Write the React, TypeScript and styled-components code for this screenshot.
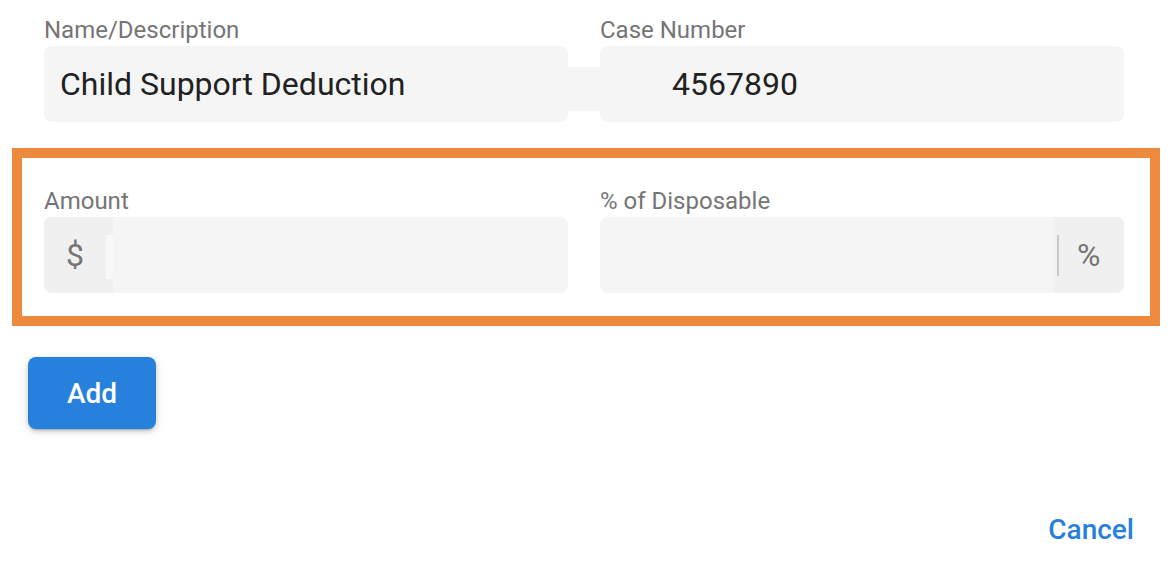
import styled, { createGlobalStyle } from 'styled-components'

const GlobalStyle = createGlobalStyle`
  body {
    margin: 0;
    background: #ffffff;
    font-family: Roboto, 'Liberation Sans', sans-serif;
  }
`

const Page = styled.div`
  width: 1170px;
  height: 578px;
  box-sizing: border-box;
  padding: 16px 10px 0 12px;
`

const FieldGrid = styled.div<{ $indent?: number }>`
  display: grid;
  grid-template-columns: 524px 32px 524px;
  grid-template-rows: auto 76px;
  align-items: start;
  margin-left: ${({ $indent }) => $indent ?? 0}px;
`

const Label = styled.label<{ $col: number }>`
  grid-row: 1;
  grid-column: ${({ $col }) => $col};
  display: block;
  font-size: 24px;
  line-height: 28px;
  margin-bottom: 2px;
  color: #757575;
  white-space: nowrap;
`

const Connector = styled.div`
  grid-row: 2;
  grid-column: 2;
  margin-top: 21px;
  height: 44px;
  background: #f5f5f5;
`

const InputBox = styled.div<{ $col: number; $pad?: number }>`
  grid-row: 2;
  grid-column: ${({ $col }) => $col};
  display: flex;
  align-items: stretch;
  height: 76px;
  border-radius: 8px;
  overflow: hidden;
  background: #f5f5f5;
  padding-left: ${({ $pad }) => $pad ?? 0}px;
  box-sizing: border-box;
`

const Value = styled.div`
  flex: 1;
  display: flex;
  align-items: center;
  font-size: 32px;
  color: #212121;
  white-space: nowrap;
`

const Prefix = styled.div`
  width: 69px;
  flex: none;
  display: flex;
  align-items: center;
  padding-left: 22px;
  box-sizing: border-box;
  position: relative;
  background: #f0f0f0;
  font-size: 32px;
  color: #757575;

  &::after {
    content: '';
    position: absolute;
    right: 0;
    top: 18px;
    width: 7px;
    height: 44px;
    background: #f8f8f8;
  }
`

const Suffix = styled.div`
  width: 70px;
  flex: none;
  display: flex;
  align-items: center;
  padding-left: 3px;
  box-sizing: border-box;
  background: #f0f0f0;
  font-size: 32px;
  color: #757575;
`

const Divider = styled.span`
  width: 2px;
  height: 41px;
  margin-right: 18px;
  background: #c9c9c9;
`

const Highlight = styled.section`
  margin-top: 26px;
  border: 10px solid #ed8a3e;
  padding: 29px 0 23px 22px;
`

const Actions = styled.div`
  margin-top: 31px;
  padding-left: 16px;
`

const PrimaryButton = styled.button`
  width: 128px;
  height: 72px;
  border: none;
  border-radius: 8px;
  background: #2780db;
  color: #ffffff;
  font-family: Roboto, 'Liberation Sans', sans-serif;
  font-size: 28px;
  font-weight: 500;
  box-shadow: 0 3px 2px -2px rgba(0, 0, 0, 0.2), 0 2px 4px rgba(0, 0, 0, 0.14), 0 2px 10px rgba(0, 0, 0, 0.12);
  cursor: pointer;
`

const Footer = styled.div`
  display: flex;
  justify-content: flex-end;
  margin-top: 64px;
  padding-right: 10px;
`

const TextButton = styled.button`
  height: 72px;
  padding: 0 16px;
  border: none;
  background: transparent;
  color: #2780db;
  font-family: Roboto, 'Liberation Sans', sans-serif;
  font-size: 28px;
  font-weight: 500;
  cursor: pointer;
`

export default function App() {
  return (
    <>
      <GlobalStyle />
      <Page>
        <FieldGrid $indent={32}>
          <Label $col={1}>Name/Description</Label>
          <Label $col={3}>Case Number</Label>
          <InputBox $col={1} $pad={16}>
            <Value>Child Support Deduction</Value>
          </InputBox>
          <Connector />
          <InputBox $col={3} $pad={72}>
            <Value>4567890</Value>
          </InputBox>
        </FieldGrid>

        <Highlight>
          <FieldGrid>
            <Label $col={1}>Amount</Label>
            <InputBox $col={1}>
              <Prefix>$</Prefix>
              <Value />
            </InputBox>
            <Label $col={3}>% of Disposable</Label>
            <InputBox $col={3}>
              <Value />
              <Suffix>
                <Divider />%
              </Suffix>
            </InputBox>
          </FieldGrid>
        </Highlight>

        <Actions>
          <PrimaryButton>Add</PrimaryButton>
        </Actions>

        <Footer>
          <TextButton>Cancel</TextButton>
        </Footer>
      </Page>
    </>
  )
}
